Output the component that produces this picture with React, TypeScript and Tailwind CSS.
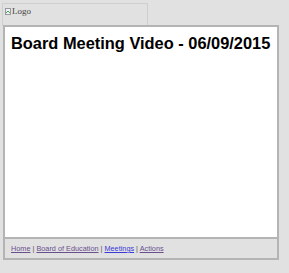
export default function App() {
  return (
    <div className="w-[289px] h-[273px] bg-[#e1e1e1] font-['Liberation_Sans',Arial,sans-serif] overflow-hidden">
      <div className="pt-[3px] pl-[2px]">
        <div className="w-[146px] h-[23px] border border-[#cfcfcf] flex items-start px-[2px] pt-[2px]">
          <span className="font-['Liberation_Serif',serif] text-[9px] leading-[10px] text-[#444] flex items-center">
            <svg width="6" height="7" viewBox="0 0 6 7" className="mr-[1px]">
              <rect x="0.5" y="0.5" width="5" height="6" fill="#eef" stroke="#999" strokeWidth="1" />
              <path d="M1 5 L3 3 L5 5" stroke="#4a4" fill="none" />
            </svg>
            Logo
          </span>
        </div>
      </div>
      <div className="ml-[3px] w-[276px] border-2 border-[#b4b4b4] -mt-[1px]">
        <div className="bg-white h-[210px] px-[6px] pt-[5px]">
          <h1 className="text-[16.4px] leading-[22px] font-bold text-black whitespace-nowrap">
            Board Meeting Video - 06/09/2015
          </h1>
        </div>
        <div className="border-t-2 border-[#b4b4b4] h-[21px] px-[6px] pt-[5px] text-[7.3px] leading-[9px] text-[#555]">
          <a href="#" className="underline text-[#6a4f8f]">Home</a> |{" "}
          <a href="#" className="underline text-[#6a4f8f]">Board of Education</a> |{" "}
          <a href="#" className="underline text-[#3a3ad8]">Meetings</a> |{" "}
          <a href="#" className="underline text-[#6a4f8f]">Actions</a>
        </div>
      </div>
    </div>
  );
}
